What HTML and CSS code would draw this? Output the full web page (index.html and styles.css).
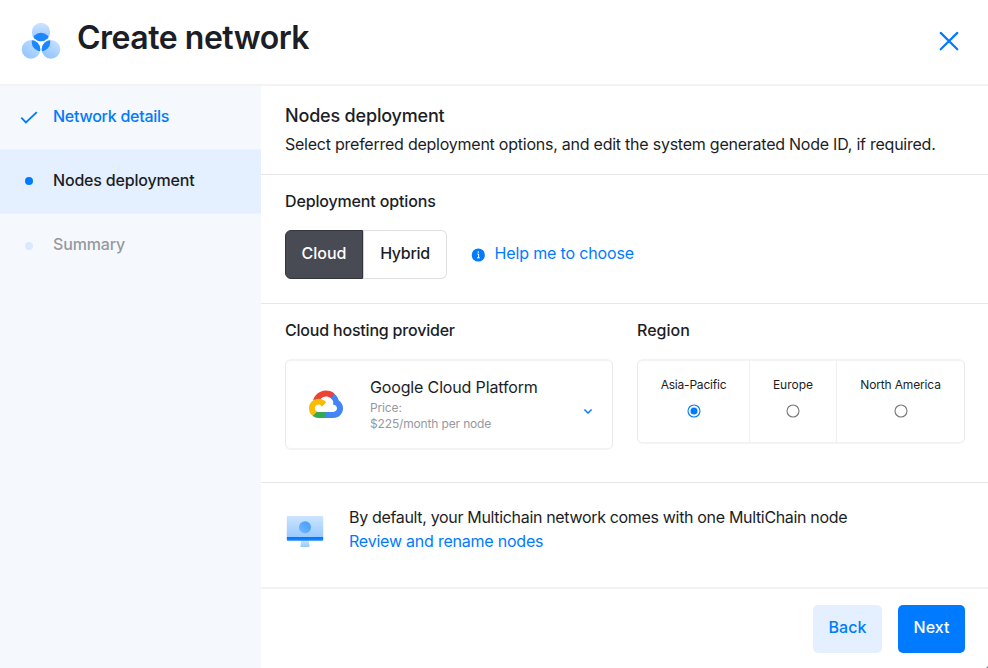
FILE: index.html
```html
<!DOCTYPE html>
<html lang="en">
<head>
<meta charset="utf-8">
<title>Create network</title>
<link rel="stylesheet" href="styles.css">
</head>
<body>
<div class="app">
  <header class="header">
    <svg class="logo" width="42" height="42" viewBox="20 20 42 42">
      <defs>
        <linearGradient id="top" x1="0" y1="0" x2="0" y2="1"><stop offset="0" stop-color="#cde4ff"/><stop offset="1" stop-color="#92c5ff"/></linearGradient>
        <linearGradient id="left" x1="1" y1="0" x2="0.2" y2="1"><stop offset="0" stop-color="#c6e0ff"/><stop offset="1" stop-color="#93c5ff"/></linearGradient>
        <linearGradient id="right" x1="0.2" y1="1" x2="0.8" y2="0"><stop offset="0" stop-color="#8cc1ff"/><stop offset="1" stop-color="#cae2ff"/></linearGradient>
        <clipPath id="core"><circle cx="41" cy="42" r="9.3"/></clipPath>
      </defs>
      <circle cx="41" cy="32" r="9.2" fill="url(#top)"/>
      <circle cx="31" cy="49.4" r="9.3" fill="url(#left)"/>
      <circle cx="51" cy="49.4" r="9.3" fill="url(#right)"/>
      <g clip-path="url(#core)" fill="#1c86ff">
        <circle cx="41" cy="32" r="9.2"/>
        <circle cx="31" cy="49.4" r="9.3"/>
        <circle cx="51" cy="49.4" r="9.3"/>
      </g>
    </svg>
    <h1 class="title">Create network</h1>
    <svg class="close" width="20" height="20" viewBox="0 0 20 20"><path d="M1.7 1.9l16.6 16.4M18.3 1.9L1.7 18.3"/></svg>
  </header>
  <div class="body">
    <nav class="steps">
      <div class="step done"><svg class="check" width="18" height="14" viewBox="0 0 18 14"><path d="M1.3 6.6l4.6 4.8L16.8 1.1"/></svg><span class="t-details">Network details</span></div>
      <div class="step active"><i class="dot"></i><span class="t-nodes">Nodes deployment</span></div>
      <div class="step pending"><i class="dot"></i><span class="t-summary">Summary</span></div>
    </nav>
    <main class="main">
      <section class="intro">
        <h2><span class="t-head">Nodes deployment</span></h2>
        <p><span class="t-desc">Select preferred deployment options, and edit the system generated Node ID, if required.</span></p>
      </section>
      <section class="options">
        <h3><span class="t-options">Deployment options</span></h3>
        <div class="choice">
          <div class="toggle"><button class="on"><span class="t-cloud">Cloud</span></button><button class="off"><span class="t-hybrid">Hybrid</span></button></div>
          <a class="help"><svg width="14" height="14" viewBox="0 0 14 14"><circle cx="7.3" cy="7" r="6.6" fill="#007bff"/><path d="M6.2 6h1.4v3.6M6 9.8h2.8" stroke="#fff" stroke-width="1" fill="none"/><circle cx="7.3" cy="4" r=".8" fill="#fff"/></svg><span class="t-help">Help me to choose</span></a>
        </div>
      </section>
      <section class="hosting">
        <div class="column">
          <h3><span class="t-hosting">Cloud hosting provider</span></h3>
          <div class="provider">
            <svg class="gcp" width="34" height="28" viewBox="0 -4 256 210"><path fill="#ea4335" d="M170.252 56.819l22.253-22.253 1.483-9.37C153.437-11.677 88.976-7.496 52.42 33.92 42.267 45.423 34.734 59.764 30.717 74.573l7.97-1.123 44.505-7.34 3.436-3.513c19.797-21.742 53.27-24.667 76.128-6.168l7.496.39z"/><path fill="#4285f4" d="M224.205 73.918a100.249 100.249 0 0 0-30.217-48.722l-31.232 31.232a55.515 55.515 0 0 1 20.379 44.037v5.544c15.35 0 27.797 12.445 27.797 27.796 0 15.352-12.446 27.485-27.797 27.485h-55.671l-5.466 5.934v33.34l5.466 5.231h55.67c39.93.311 72.553-31.494 72.864-71.424a72.303 72.303 0 0 0-31.793-60.453"/><path fill="#34a853" d="M71.87 205.796h55.593V161.29H71.87a27.275 27.275 0 0 1-11.4-2.498l-7.887 2.42-22.409 22.253-1.952 7.574c12.567 9.489 27.9 14.825 43.647 14.757"/><path fill="#fbbc05" d="M71.87 61.425C31.94 61.664-.237 94.228.001 134.158a72.301 72.301 0 0 0 28.222 56.88l32.248-32.246c-13.99-6.322-20.208-22.786-13.887-36.776 6.32-13.99 22.786-20.208 36.775-13.888a27.796 27.796 0 0 1 13.887 13.888l32.248-32.248A72.224 72.224 0 0 0 71.87 61.425"/></svg>
            <div class="provider-text">
              <div class="name"><span class="t-gcp">Google Cloud Platform</span></div>
              <div class="price"><span class="t-price">Price:</span><br><span class="t-cost">$225/month per node</span></div>
            </div>
            <svg class="chevron" width="10" height="7" viewBox="0 0 10 7"><path d="M1.4 1.5L5 5l3.6-3.5"/></svg>
          </div>
        </div>
        <div class="column">
          <h3><span class="t-region">Region</span></h3>
          <div class="regions">
            <label class="region asia"><span class="t-asia">Asia-Pacific</span><svg width="14" height="14" viewBox="0 0 14 14"><circle cx="7" cy="7" r="6" fill="none" stroke="#007bff" stroke-width="1.1"/><circle cx="7" cy="7" r="3.5" fill="#007bff"/></svg></label>
            <label class="region europe"><span class="t-europe">Europe</span><svg width="14" height="14" viewBox="0 0 14 14"><circle cx="7" cy="7" r="6" fill="none" stroke="#767676" stroke-width="1.1"/></svg></label>
            <label class="region america"><span class="t-america">North America</span><svg width="14" height="14" viewBox="0 0 14 14"><circle cx="7" cy="7" r="6" fill="none" stroke="#767676" stroke-width="1.1"/></svg></label>
          </div>
        </div>
      </section>
      <section class="summary">
        <svg class="monitor" width="38" height="32" viewBox="0 0 38 32">
          <defs>
            <linearGradient id="screen" x1="0" y1="0" x2="0" y2="1"><stop offset="0" stop-color="#cce5ff"/><stop offset="1" stop-color="#99caff"/></linearGradient>
            <linearGradient id="bar" x1="0" y1="0" x2="0" y2="1"><stop offset="0" stop-color="#0075f5"/><stop offset="1" stop-color="#1c88ff"/></linearGradient>
            <linearGradient id="ball" x1="1" y1="0" x2="0" y2="1"><stop offset="0" stop-color="#3f9bff"/><stop offset="1" stop-color="#75b7ff"/></linearGradient>
            <linearGradient id="stand" x1="0" y1="0" x2="0" y2="1"><stop offset="0" stop-color="#cae4ff"/><stop offset="1" stop-color="#93c7ff"/></linearGradient>
          </defs>
          <path d="M15.2 24.5h7.6l.8 6.5h-9.2z" fill="url(#stand)"/>
          <path d="M1.8 0h34.4q1 0 1 1v20H.8V1q0-1 1-1z" fill="url(#screen)"/>
          <path d="M.8 21h36.4v2.7q0 1-1 1H1.8q-1 0-1-1z" fill="url(#bar)"/>
          <circle cx="19" cy="11.2" r="6" fill="url(#ball)"/>
        </svg>
        <div><span class="t-default">By default, your Multichain network comes with one MultiChain node</span><br><a class="t-review">Review and rename nodes</a></div>
      </section>
      <footer class="footer">
        <button class="back"><span class="t-back">Back</span></button>
        <button class="next"><span class="t-next">Next</span></button>
      </footer>
    </main>
  </div>
</div>
</body>
</html>
```

FILE: styles.css
```css
* { box-sizing: border-box; margin: 0; padding: 0; }
body { font: 400 16px/24px Inter, "Liberation Sans", sans-serif; color: #1b1e26; background: #fff; }
button { font: inherit; border: 0; }
svg { display: block; flex: none; fill-rule: evenodd; }
span, a { white-space: nowrap; }
.app { width: 988px; height: 668px; display: flex; flex-direction: column; overflow: hidden; position: relative; }
/* rounded window corner */
.app::after { content: ""; position: absolute; right: 0; bottom: 0; width: 2px; height: 2px; background: linear-gradient(135deg, transparent 40%, #7d8799 60%); }
.header { height: 86px; border-bottom: 2px solid #f3f3f3; display: flex; align-items: flex-start; padding: 20px 29px 0 20px; }
.title { font-size: 32px; line-height: 36px; font-weight: 600; letter-spacing: -.48px; margin-left: 15px; flex: 1; white-space: nowrap; }
.close { margin-top: 11px; fill: none; stroke: #007bff; stroke-width: 2.2; stroke-linecap: round; }
.body { flex: 1; display: flex; min-height: 0; }
.steps { width: 261px; background: #f5f8fd; font-weight: 500; }
.step { height: 64px; display: flex; align-items: center; padding: 0 0 4px 20px; }
.step.done { color: #007bff; height: 63px; padding-bottom: 3px; }
.step.active { background: #e4f0ff; height: 65px; border-top: 1px solid #edf4fe; border-bottom: 1px solid #edf4fe; }
.step.pending { color: #97999e; }
.check { margin: 3px 15px 0 0; fill: none; stroke: #007bff; stroke-width: 1.8; }
.dot { width: 8px; height: 8px; border-radius: 50%; background: #007bff; margin: 3px 20px 0 5px; }
.pending .dot { background: #d9eaff; }
.main { flex: 1; display: flex; flex-direction: column; min-width: 0; }
section { border-bottom: 1px solid #e6e6e7; padding: 0 23px 0 24px; }
h2 { font-size: 18px; line-height: 24px; font-weight: 500; }
h3 { font-size: 16px; line-height: 24px; font-weight: 500; }
.intro { height: 89px; padding-top: 18px; }
.intro p { margin-top: 4px; }
.options { height: 129px; padding-top: 14px; }
.choice { display: flex; align-items: center; margin-top: 17px; }
.toggle { display: flex; }
.toggle button { height: 49px; padding-bottom: 3px; font-weight: 500; }
.toggle .on { width: 78px; background: #484b53; color: #fff; border: 1px solid #32353c; border-radius: 6px 0 0 6px; }
.toggle .off { width: 84px; background: #fff; color: #1b1e26; border: 1px solid #dedfe0; border-left-color: #d0d1d3; border-radius: 0 6px 6px 0; }
.help { display: flex; align-items: center; color: #007bff; margin-left: 24px; padding-bottom: 3px; }
.help svg { margin: 3px 9.5px 0 0; }
.hosting { height: 179px; padding-top: 14px; display: flex; gap: 24px; }
.column { width: 328px; }
.provider, .regions { margin-top: 17px; border: solid; border-width: 2px 1px; border-color: #f3f3f3 #e9e9ea; border-radius: 6px; display: flex; }
.provider { height: 91px; align-items: flex-start; padding: 14px 19px 0 23px; }
.gcp { margin-top: 15px; }
.provider-text { margin-left: 27px; flex: 1; }
.price { font-size: 12px; line-height: 16px; color: #97999e; margin-top: 1px; }
.chevron { margin-top: 33px; fill: none; stroke: #007bff; stroke-width: 1.5; }
.regions { height: 85px; }
.region { display: flex; flex-direction: column; align-items: center; padding-top: 15px; font-size: 12px; line-height: 18px; border-left: 1px solid #f0f0f1; }
.region svg { margin-top: 10px; }
.asia { width: 111px; border-left: 0; }
.europe { width: 87px; }
.america { flex: 1; }
.summary { height: 106px; border-bottom: 2px solid #f3f3f3; display: flex; padding-top: 22px; }
.monitor { margin: 11px 25px 0 1px; }
.t-review { color: #007bff; }
.footer { height: 79px; padding: 16px 23px 0 0; display: flex; justify-content: flex-end; gap: 16px; }
.footer button { height: 48px; border-radius: 5px; font-weight: 500; padding-bottom: 4px; }
.back { width: 69px; background: #e4f0ff; color: #007bff; }
.next { width: 67px; background: #007bff; color: #fff; }
.t-details { letter-spacing: -.26px; }
.t-nodes, .t-head { letter-spacing: -.18px; }
.t-summary, .t-options, .t-help, .t-gcp, .t-cost, .t-america, .t-price { letter-spacing: -.15px; }
.t-desc { letter-spacing: -.24px; }
.t-hybrid { letter-spacing: -.3px; }
.t-hosting, .t-asia { letter-spacing: -.2px; }
.t-default { letter-spacing: -.33px; }
.t-review { letter-spacing: -.22px; }
```
